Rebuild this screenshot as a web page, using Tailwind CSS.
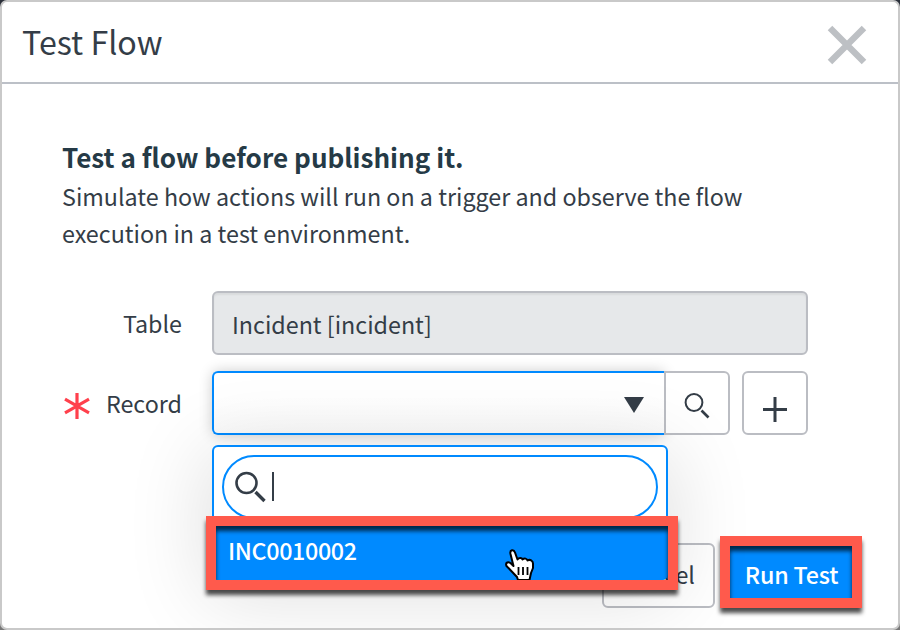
<!DOCTYPE html>
<html lang="en">
<head>
<meta charset="utf-8">
<title>Test Flow</title>
<script src="https://cdn.jsdelivr.net/npm/@tailwindcss/browser@4"></script>
</head>
<body class="bg-gradient-to-b from-[#2b303a] to-[#777] overflow-hidden">
<main class="relative w-[900px] h-[630px] overflow-hidden rounded-[7px] border-2 border-[#c9c9c9] bg-white text-[#343d47] text-[23.29px] leading-[37px] font-['Noto_Sans_CJK_SC','Source_Sans_Pro',sans-serif]">
  <header class="flex h-[82px] items-center justify-between border-b-2 border-[#bcc0c7] pl-5 pr-[31px]">
    <h1 class="-mt-[2px] text-[32.2px] leading-[40px] whitespace-nowrap">Test Flow</h1>
    <button aria-label="Close" class="mt-[5px]"><svg class="block" width="40" height="40" viewBox="0 0 40 40" fill="none" stroke="#bdc0c4" stroke-width="6.4"><path d="M3 3 37 37M37 3 3 37"/></svg></button>
  </header>

  <section class="pl-[60px] pt-[54px]">
    <h2 class="text-[26.1px] leading-[38px] font-bold text-[#253a46] whitespace-nowrap">Test a flow before publishing it.</h2>
    <p class="mt-[2px] whitespace-nowrap">Simulate how actions will run on a trigger and observe the flow<br>execution in a test environment.</p>
  </section>

  <form class="relative z-10 mt-[39px] flex flex-col gap-4 pl-[60px]">
    <div class="flex h-16 items-center">
      <label class="w-[120px] text-right">Table</label>
      <div class="ml-[30px] flex h-16 w-[596px] items-center rounded-[6px] border-2 border-[#bbbdc3] bg-[#e6e8ea] pl-[18px] pt-[3px] shadow-[inset_0_2px_2px_rgba(0,0,0,0.06)]">Incident [incident]</div>
    </div>
    <div class="flex h-16 items-center">
      <svg class="ml-[2px] mt-[6px]" width="26" height="28" viewBox="0 0 26 28" fill="none" stroke="#ff404c" stroke-width="3.2"><path d="M13 1V27M1 7.2 25 20.8M25 7.2 1 20.8"/></svg>
      <label class="w-[92px] text-right">Record</label>
      <div class="relative ml-[30px] flex">
        <div class="flex h-16 w-[452px] items-center justify-end rounded-l-[6px] border-2 border-r-0 border-[#008aff] bg-gradient-to-b from-white from-40% to-[#fafafa] pr-5 shadow-[0_0_14px_rgba(0,0,0,0.2)]">
          <svg class="mt-1" width="20" height="16" viewBox="0 0 20 16"><path d="M0 0H20L10 16Z" fill="#343d47"/></svg>
        </div>
        <button type="button" aria-label="Search" class="relative flex h-16 w-[66px] items-center justify-center rounded-r-[6px] border-2 border-[#bbbdc3] bg-white">
          <svg class="mt-[6px]" width="26" height="26" viewBox="0 0 26 26" fill="none" stroke="#343d47"><circle cx="10" cy="9.5" r="8.4" stroke-width="2"/><path d="m17.5 17.5 7 7" stroke-width="2.6"/></svg>
        </button>
        <div class="absolute left-0 top-[74px] h-[135px] w-[456px] rounded-[6px] border-2 border-[#008aff] bg-white shadow-[0_12px_80px_8px_rgba(0,0,0,0.12)]">
          <div class="mx-2 mt-2 flex h-[64px] items-center rounded-full border-2 border-[#008aff] pl-[11px]">
            <svg width="32" height="32" viewBox="0 0 32 32" fill="none" stroke="#343d47"><circle cx="11.5" cy="12" r="10" stroke-width="2.6"/><path d="m20.5 21 9 9" stroke-width="3.4"/></svg>
            <span class="ml-[5px] -mt-px h-[29px] w-[2px] bg-[#343d47]"></span>
          </div>
          <div class="absolute inset-x-[-2px] bottom-[-2px] flex h-[60px] items-center rounded-b-[6px] bg-[#008aff] pl-4 font-medium tracking-[-0.35px] text-white">INC0010002</div>
        </div>
      </div>
      <button type="button" aria-label="Add" class="ml-3 flex h-16 w-[66px] items-center justify-center rounded-[6px] border-2 border-[#bbbdc3]">
        <svg class="mt-3" width="24" height="25" viewBox="0 0 24 25" fill="none" stroke="#343d47" stroke-width="3"><path d="M12 0V25M0 12.5H24"/></svg>
      </button>
    </div>
  </form>

  <footer class="mt-[108px] flex gap-[14px] pl-[600px]">
    <button class="h-[65px] w-[113px] rounded-[6px] border-2 border-[#bbbdc3] pb-[2px]">Cancel</button>
    <button class="h-[65px] w-[125px] rounded-[6px] bg-[#008aff] pb-[2px] font-medium tracking-[-0.2px] text-white whitespace-nowrap">Run Test</button>
  </footer>

  <div class="absolute left-[204px] top-[514px] z-20 h-[74px] w-[472px] border-[10px] border-[#ff5a4c] drop-shadow-[0_5px_2px_rgba(0,0,0,0.7)]"></div>
  <div class="absolute left-[718px] top-[534px] z-20 h-[72px] w-[142px] border-[10px] border-[#ff5a4c] drop-shadow-[0_5px_2px_rgba(0,0,0,0.7)]"></div>
  <svg class="absolute left-[502px] top-[546px] z-30" width="32" height="32" viewBox="0 0 32 32"><path d="M9 16 6.500 6C5.500 1.500 9.800 1 11 4.500L13.500 11.500C15 9.300 18 9.800 18.500 11.500 20.500 9.800 23 10.500 23.500 12.500 26 11 29 12.500 29 15.500V20L27 25 25.500 32H14L13 29 2.500 18C1 14.500 4.500 13 7 15.500L9.500 18Z" fill="#fff" stroke="#000" stroke-width="2" stroke-linejoin="round"/><path d="M14.500 19V27M19 19V27M23.500 19V27" stroke="#000" stroke-width="1.800"/></svg>
</main>
</body>
</html>
